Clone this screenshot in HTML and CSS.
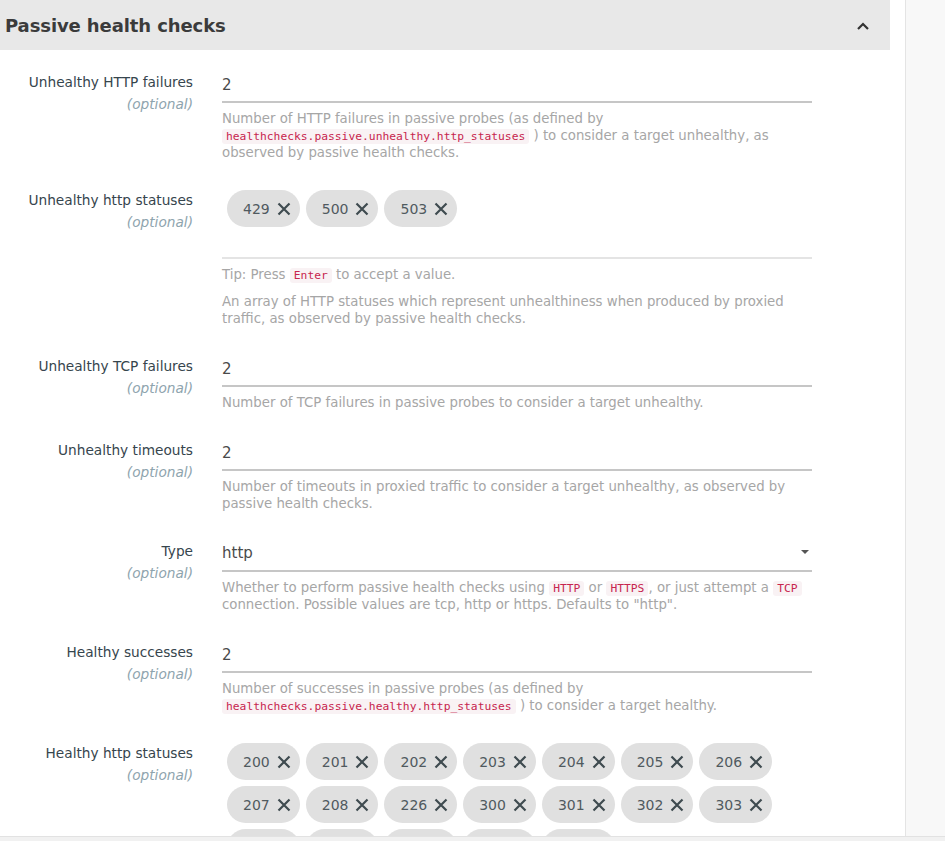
FILE: index.html
```html
<!DOCTYPE html>
<html>
<head>
<meta charset="utf-8">
<link rel="stylesheet" href="styles.css">
</head>
<body>
<div class="app">
  <div class="main">
    <div class="content">
      <section class="panel">
        <header class="panel-head">
          <h2 class="panel-title">Passive health checks</h2>
          <svg class="chev" width="14" height="10" viewBox="0 0 14 10"><path d="M2 8 L7 3 L12 8" fill="none" stroke="#333" stroke-width="2.2"/></svg>
        </header>
        <div class="panel-body">

          <div class="form-row">
            <div class="label"><span class="name">Unhealthy HTTP failures</span><span class="opt">(optional)</span></div>
            <div class="field">
              <div class="input">2</div>
              <p class="help">Number of HTTP failures in passive probes (as defined by <code>healthchecks.passive.unhealthy.http_statuses</code> ) to consider a target unhealthy, as observed by passive health checks.</p>
            </div>
          </div>

          <div class="form-row">
            <div class="label"><span class="name">Unhealthy http statuses</span><span class="opt">(optional)</span></div>
            <div class="field">
              <div class="tags">
                <div class="chips">
                  <span class="chip">429<svg class="x" viewBox="0 0 16 16"><path d="M2.5 2.5 L13.5 13.5 M13.5 2.5 L2.5 13.5"/></svg></span>
                  <span class="chip">500<svg class="x" viewBox="0 0 16 16"><path d="M2.5 2.5 L13.5 13.5 M13.5 2.5 L2.5 13.5"/></svg></span>
                  <span class="chip">503<svg class="x" viewBox="0 0 16 16"><path d="M2.5 2.5 L13.5 13.5 M13.5 2.5 L2.5 13.5"/></svg></span>
                </div>
                <div class="tag-input"></div>
              </div>
              <p class="help">Tip: Press <code>Enter</code> to accept a value.</p>
              <p class="help help-gap">An array of HTTP statuses which represent unhealthiness when produced by proxied traffic, as observed by passive health checks.</p>
            </div>
          </div>

          <div class="form-row">
            <div class="label"><span class="name">Unhealthy TCP failures</span><span class="opt">(optional)</span></div>
            <div class="field">
              <div class="input">2</div>
              <p class="help">Number of TCP failures in passive probes to consider a target unhealthy.</p>
            </div>
          </div>

          <div class="form-row">
            <div class="label"><span class="name">Unhealthy timeouts</span><span class="opt">(optional)</span></div>
            <div class="field">
              <div class="input">2</div>
              <p class="help">Number of timeouts in proxied traffic to consider a target unhealthy, as observed by passive health checks.</p>
            </div>
          </div>

          <div class="form-row">
            <div class="label"><span class="name">Type</span><span class="opt">(optional)</span></div>
            <div class="field">
              <div class="input select">http<span class="caret"></span></div>
              <p class="help">Whether to perform passive health checks using <code>HTTP</code> or <code>HTTPS</code>, or just attempt a <code>TCP</code> connection. Possible values are tcp, http or https. Defaults to "http".</p>
            </div>
          </div>

          <div class="form-row">
            <div class="label"><span class="name">Healthy successes</span><span class="opt">(optional)</span></div>
            <div class="field">
              <div class="input">2</div>
              <p class="help">Number of successes in passive probes (as defined by <code>healthchecks.passive.healthy.http_statuses</code> ) to consider a target healthy.</p>
            </div>
          </div>

          <div class="form-row">
            <div class="label"><span class="name">Healthy http statuses</span><span class="opt">(optional)</span></div>
            <div class="field">
              <div class="tags">
                <div class="chips">
                  <span class="chip">200<svg class="x" viewBox="0 0 16 16"><path d="M2.5 2.5 L13.5 13.5 M13.5 2.5 L2.5 13.5"/></svg></span>
                  <span class="chip">201<svg class="x" viewBox="0 0 16 16"><path d="M2.5 2.5 L13.5 13.5 M13.5 2.5 L2.5 13.5"/></svg></span>
                  <span class="chip">202<svg class="x" viewBox="0 0 16 16"><path d="M2.5 2.5 L13.5 13.5 M13.5 2.5 L2.5 13.5"/></svg></span>
                  <span class="chip">203<svg class="x" viewBox="0 0 16 16"><path d="M2.5 2.5 L13.5 13.5 M13.5 2.5 L2.5 13.5"/></svg></span>
                  <span class="chip">204<svg class="x" viewBox="0 0 16 16"><path d="M2.5 2.5 L13.5 13.5 M13.5 2.5 L2.5 13.5"/></svg></span>
                  <span class="chip">205<svg class="x" viewBox="0 0 16 16"><path d="M2.5 2.5 L13.5 13.5 M13.5 2.5 L2.5 13.5"/></svg></span>
                  <span class="chip">206<svg class="x" viewBox="0 0 16 16"><path d="M2.5 2.5 L13.5 13.5 M13.5 2.5 L2.5 13.5"/></svg></span>
                  <span class="chip">207<svg class="x" viewBox="0 0 16 16"><path d="M2.5 2.5 L13.5 13.5 M13.5 2.5 L2.5 13.5"/></svg></span>
                  <span class="chip">208<svg class="x" viewBox="0 0 16 16"><path d="M2.5 2.5 L13.5 13.5 M13.5 2.5 L2.5 13.5"/></svg></span>
                  <span class="chip">226<svg class="x" viewBox="0 0 16 16"><path d="M2.5 2.5 L13.5 13.5 M13.5 2.5 L2.5 13.5"/></svg></span>
                  <span class="chip">300<svg class="x" viewBox="0 0 16 16"><path d="M2.5 2.5 L13.5 13.5 M13.5 2.5 L2.5 13.5"/></svg></span>
                  <span class="chip">301<svg class="x" viewBox="0 0 16 16"><path d="M2.5 2.5 L13.5 13.5 M13.5 2.5 L2.5 13.5"/></svg></span>
                  <span class="chip">302<svg class="x" viewBox="0 0 16 16"><path d="M2.5 2.5 L13.5 13.5 M13.5 2.5 L2.5 13.5"/></svg></span>
                  <span class="chip">303<svg class="x" viewBox="0 0 16 16"><path d="M2.5 2.5 L13.5 13.5 M13.5 2.5 L2.5 13.5"/></svg></span>
                  <span class="chip">304<svg class="x" viewBox="0 0 16 16"><path d="M2.5 2.5 L13.5 13.5 M13.5 2.5 L2.5 13.5"/></svg></span>
                  <span class="chip">305<svg class="x" viewBox="0 0 16 16"><path d="M2.5 2.5 L13.5 13.5 M13.5 2.5 L2.5 13.5"/></svg></span>
                  <span class="chip">306<svg class="x" viewBox="0 0 16 16"><path d="M2.5 2.5 L13.5 13.5 M13.5 2.5 L2.5 13.5"/></svg></span>
                  <span class="chip">307<svg class="x" viewBox="0 0 16 16"><path d="M2.5 2.5 L13.5 13.5 M13.5 2.5 L2.5 13.5"/></svg></span>
                  <span class="chip">308<svg class="x" viewBox="0 0 16 16"><path d="M2.5 2.5 L13.5 13.5 M13.5 2.5 L2.5 13.5"/></svg></span>
                </div>
                <div class="tag-input"></div>
              </div>
            </div>
          </div>

        </div>
      </section>
    </div>
    <aside class="side"></aside>
  </div>
  <div class="hscroll"></div>
</div>
</body>
</html>
```

FILE: styles.css
```css
* { box-sizing: border-box; }
html, body { margin: 0; padding: 0; background: #fff; }
body { font-family: "DejaVu Sans", sans-serif; }

.app {
  height: 841px;
  display: flex;
  flex-direction: column;
  overflow: hidden;
}
.main {
  flex: 1;
  min-height: 0;
  display: flex;
  overflow: hidden;
}
.content {
  flex: 1;
  padding-right: 15px;
  min-width: 0;
}
.side {
  width: 40px;
  flex: none;
  background: #f8f8f8;
  border-left: 1px solid #e4e4e4;
}
.hscroll {
  height: 5px;
  flex: none;
  background: #f1f1f1;
  border-top: 1px solid #e2e2e2;
}

.panel-head {
  height: 50px;
  background: #e8e8e8;
  display: flex;
  align-items: center;
  justify-content: space-between;
  padding: 0 20px 0 5px;
}
.panel-title {
  margin: 0;
  font-size: 18px;
  font-weight: bold;
  color: #3b3b3b;
  letter-spacing: -0.1px;
}
.chev { display: block; margin-top: 1px; }

.panel-body { padding-top: 17px; }

.form-row {
  display: grid;
  grid-template-columns: 193px 590px;
  column-gap: 29px;
  margin-bottom: 24px;
}
.label {
  text-align: right;
  padding-top: 7px;
  display: flex;
  flex-direction: column;
  align-items: flex-end;
}
.name {
  font-size: 13.7px;
  line-height: 17px;
  color: #36454d;
  white-space: nowrap;
}
.opt {
  font-size: 13.7px;
  line-height: 17px;
  margin-top: 5px;
  font-style: italic;
  color: #8ea4ae;
}

.input {
  height: 36px;
  line-height: 36px;
  border-bottom: 2px solid #c6c6c6;
  font-size: 15px;
  color: #4a4a4a;
}
.select { display: flex; justify-content: space-between; align-items: center; }
.caret {
  width: 0; height: 0;
  border-left: 4px solid transparent;
  border-right: 4px solid transparent;
  border-top: 4px solid #555;
  margin-right: 3px;
  margin-top: -2px;
}

.help {
  margin: 7px 0 0;
  font-size: 13.3px;
  line-height: 17px;
  color: #a6a6a6;
}
.help-gap { margin-top: 10px; }

code {
  font-family: "DejaVu Sans Mono", monospace;
  font-size: 11.3px;
  line-height: 14px;
  color: #c7254e;
  background: #f9f2f4;
  padding: 1px 4px;
  border-radius: 3px;
}

.tags {
  border-bottom: 2px solid #e4e4e4;
  padding: 5px 0 0 5px;
}
.chips {
  display: flex;
  flex-wrap: wrap;
  gap: 6px;
}
.chip {
  height: 37px;
  border-radius: 19px;
  background: #e0e0e0;
  display: inline-flex;
  align-items: center;
  padding: 0 8px 0 16px;
  font-size: 14px;
  color: #505a5f;
}
.x {
  width: 16px;
  height: 16px;
  margin-left: 6px;
  fill: none;
  stroke: #3f4b50;
  stroke-width: 2.2;
}
.tag-input { height: 30px; }
```
